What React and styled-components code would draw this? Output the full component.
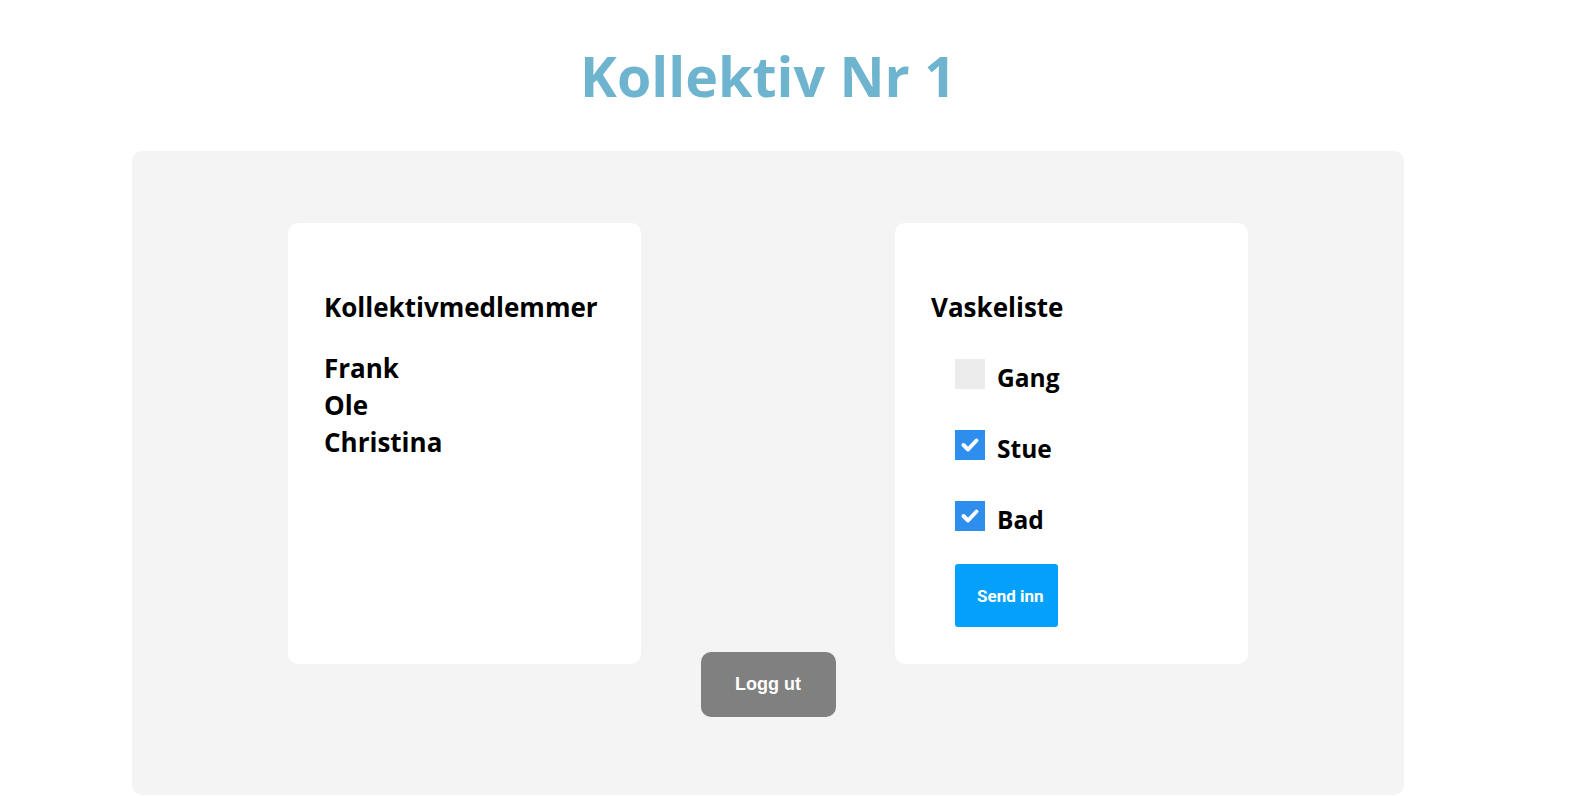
import React, { useState } from "react";
import styled, { createGlobalStyle } from "styled-components";

const GlobalStyle = createGlobalStyle`
    body {
        margin: 0;
        background: #fff;
        font-family: "Open Sans", "Noto Sans", sans-serif;
    }
`

const members = ["Frank", "Ole", "Christina"];

function App() {
    const [tasks, setTasks] = useState([
        { name: "Gang", done: false },
        { name: "Stue", done: true },
        { name: "Bad", done: true },
    ]);

    const toggle = (i) =>
        setTasks(tasks.map((t, j) => (j === i ? { ...t, done: !t.done } : t)));

    return (
        <Page>
            <GlobalStyle />
            <Title>Kollektiv Nr 1</Title>
            <Panel>
                <Cards>
                    <Card>
                        <CardHeading>Kollektivmedlemmer</CardHeading>
                        <Members>
                            {members.map((m) => (
                                <Member key={m}>{m}</Member>
                            ))}
                        </Members>
                    </Card>
                    <Card>
                        <CardHeading>Vaskeliste</CardHeading>
                        <TaskList>
                            {tasks.map((t, i) => (
                                <TaskRow key={t.name} onClick={() => toggle(i)}>
                                    <Box $checked={t.done}>
                                        {t.done && (
                                            <svg width="30" height="30" viewBox="0 0 30 30">
                                                <path d="M8.5 15 L13 19.5 L21.5 10.5" fill="none" stroke="#fff" strokeWidth="4" strokeLinecap="round" strokeLinejoin="round" />
                                            </svg>
                                        )}
                                    </Box>
                                    <TaskLabel>{t.name}</TaskLabel>
                                </TaskRow>
                            ))}
                        </TaskList>
                        <SendButton>Send inn</SendButton>
                    </Card>
                </Cards>
                <LogoutButton>Logg ut</LogoutButton>
            </Panel>
        </Page>
    );
}

const Page = styled.div`
    width: 1536px;
    padding-top: 36px;
`
const Title = styled.h1`
    margin: 0 0 35px;
    text-align: center;
    font-size: 55.5px;
    line-height: 80px;
    font-weight: 700;
    color: rgb(111, 180, 207);
`
const Panel = styled.section`
    margin: 0 132px;
    background: #f4f4f4;
    border-radius: 10px;
    padding: 72px 0 78px;
    display: flex;
    flex-direction: column;
    align-items: center;
`
const Cards = styled.div`
    display: flex;
    justify-content: center;
    gap: 254px;
`
const Card = styled.div`
    box-sizing: border-box;
    width: 353px;
    height: 441px;
    background: #fff;
    border-radius: 10px;
    padding: 66px 36px 0;
    color: #000;
`
const CardHeading = styled.h2`
    margin: 0;
    font-size: 26px;
    line-height: 36px;
    font-weight: 700;
`
const Members = styled.div`
    margin-top: 25px;
    display: flex;
    flex-direction: column;
`
const Member = styled.span`
    font-size: 26px;
    line-height: 37px;
    font-weight: 700;
`
const TaskList = styled.div`
    margin-top: 34px;
    padding-left: 24px;
    display: flex;
    flex-direction: column;
    gap: 41px;
`
const TaskRow = styled.label`
    display: flex;
    align-items: center;
    gap: 12px;
    height: 30px;
    cursor: pointer;
`
const Box = styled.span`
    width: 30px;
    height: 30px;
    display: block;
    background: ${(p) => (p.$checked ? "rgb(45, 142, 238)" : "#ececec")};
    svg {
        display: block;
    }
`
const TaskLabel = styled.span`
    font-size: 24.5px;
    font-weight: 700;
    line-height: 30px;
    margin-top: 7px;
`
const SendButton = styled.button`
    margin: 33px 0 0 24px;
    width: 103px;
    height: 63px;
    border: none;
    border-radius: 3px;
    background: rgb(3, 161, 252);
    color: #fff;
    font-family: Roboto, sans-serif;
    font-weight: 700;
    font-size: 17px;
    padding: 0 0 0 22px;
    text-align: left;
    cursor: pointer;
`
const LogoutButton = styled.button`
    margin-top: -12px;
    width: 135px;
    height: 65px;
    border: none;
    border-radius: 10px;
    background: #808080;
    color: #fff;
    font-family: "Liberation Sans", Arial, sans-serif;
    font-weight: 700;
    font-size: 18px;
    cursor: pointer;
`

export default App;
